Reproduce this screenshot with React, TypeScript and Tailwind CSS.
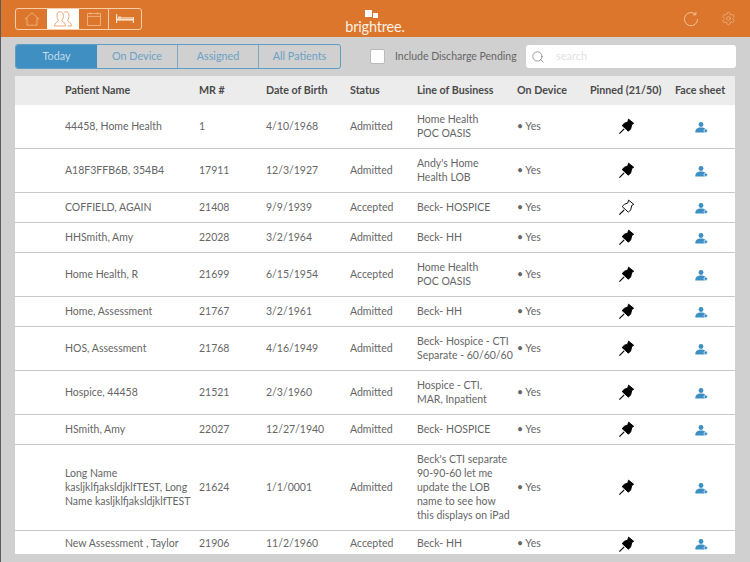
import { Search, Settings } from "lucide-react";

type Row = {
    name: string[];
    mr: string;
    dob: string;
    status: string;
    lob: string[];
    h: string;
    pinned?: boolean;
};

const rows: Row[] = [
    { name: ["44458, Home Health"], mr: "1", dob: "4/10/1968", status: "Admitted", lob: ["Home Health", "POC OASIS"], h: "h-[44px]", pinned: true },
    { name: ["A18F3FFB6B, 354B4"], mr: "17911", dob: "12/3/1927", status: "Admitted", lob: ["Andy's Home", "Health LOB"], h: "h-[44px]", pinned: true },
    { name: ["COFFIELD, AGAIN"], mr: "21408", dob: "9/9/1939", status: "Accepted", lob: ["Beck- HOSPICE"], h: "h-[30px]" },
    { name: ["HHSmith, Amy"], mr: "22028", dob: "3/2/1964", status: "Admitted", lob: ["Beck- HH"], h: "h-[30px]", pinned: true },
    { name: ["Home Health, R"], mr: "21699", dob: "6/15/1954", status: "Accepted", lob: ["Home Health", "POC OASIS"], h: "h-[44px]", pinned: true },
    { name: ["Home, Assessment"], mr: "21767", dob: "3/2/1961", status: "Admitted", lob: ["Beck- HH"], h: "h-[30px]", pinned: true },
    { name: ["HOS, Assessment"], mr: "21768", dob: "4/16/1949", status: "Admitted", lob: ["Beck- Hospice - CTI", "Separate - 60/60/60"], h: "h-[44px]", pinned: true },
    { name: ["Hospice, 44458"], mr: "21521", dob: "2/3/1960", status: "Admitted", lob: ["Hospice - CTI,", "MAR, Inpatient"], h: "h-[44px]", pinned: true },
    { name: ["HSmith, Amy"], mr: "22027", dob: "12/27/1940", status: "Admitted", lob: ["Beck- HOSPICE"], h: "h-[30px]", pinned: true },
    {
        name: ["Long Name", "kasljklfjaksldjklfTEST, Long", "Name kasljklfjaksldjklfTEST"],
        mr: "21624",
        dob: "1/1/0001",
        status: "Admitted",
        lob: ["Beck's CTI separate", "90-90-60 let me", "update the LOB", "name to see how", "this displays on iPad"],
        h: "h-[86px]",
        pinned: true,
    },
    { name: ["New Assessment , Taylor"], mr: "21906", dob: "11/2/1960", status: "Accepted", lob: ["Beck- HH"], h: "h-[26px]", pinned: true },
];

function Pin({ filled }: { filled?: boolean }) {
    return (
        <svg width="17" height="17" viewBox="0 0 18 18" className="text-black">
            <path d="M1.5 16.5 L6.5 11.5" stroke="currentColor" strokeWidth="1.2" />
            <path
                d="M11.2 1.2 L16.6 5.6 L14.6 6.8 L13.4 11.6 L11 14 L4.4 8 L6.8 5.6 L10.4 4.2 Z"
                fill={filled ? "currentColor" : "white"}
                stroke="currentColor"
                strokeWidth="1"
                strokeLinejoin="round"
            />
        </svg>
    );
}

function FaceSheet() {
    return (
        <svg width="13" height="11" viewBox="0 0 13 11" className="text-[#3d8fc4]">
            <circle cx="6" cy="2.5" r="2.4" fill="currentColor" />
            <path d="M0.3 10.6 C0.3 7.4 2 5.6 6 5.6 C10 5.6 11.7 7.4 11.7 10.6 Z" fill="currentColor" />
            <circle cx="10.8" cy="8.8" r="1.8" fill="currentColor" stroke="white" strokeWidth="0.7" />
        </svg>
    );
}

function HomeIcon() {
    return (
        <svg width="16" height="14" viewBox="0 0 16 14" fill="none" stroke="currentColor" strokeWidth="0.8">
            <path d="M0.8 7.2 L8 0.8 L15.2 7.2" />
            <path d="M3 6 V13.2 H13 V6" />
        </svg>
    );
}

function PeopleIcon() {
    return (
        <svg width="18" height="16" viewBox="0 0 18 16" fill="none" stroke="currentColor" strokeWidth="0.8">
            <path d="M10 15 H0.6 C0.6 12 2.4 11.4 4 10.4 C4.6 10 4.4 9 3.8 8.2 C3 7 3 5.6 3 4.4 C3 2 4.4 0.8 6.2 0.8 C8 0.8 9.4 2 9.4 4.4 C9.4 5.6 9.4 7 8.6 8.2 C8 9 7.8 10 8.4 10.4 C10 11.4 11.4 12 11.4 15 H10" />
            <path d="M10.2 1.2 C10.8 0.9 11.2 0.8 11.8 0.8 C13.6 0.8 15 2 15 4.4 C15 5.6 15 7 14.2 8.2 C13.6 9 13.4 10 14 10.4 C15.6 11.4 17.4 12 17.4 15 H13.4" />
        </svg>
    );
}

function CalendarIcon() {
    return (
        <svg width="14" height="14" viewBox="0 0 14 14" fill="none" stroke="currentColor" strokeWidth="0.8">
            <rect x="0.6" y="1.6" width="12.8" height="11.8" />
            <path d="M0.6 4.4 H13.4 M3.6 0.4 V2.6 M10.4 0.4 V2.6" />
        </svg>
    );
}

function BedIcon() {
    return (
        <svg width="18" height="9" viewBox="0 0 18 9" fill="currentColor">
            <rect x="0" y="0" width="1.2" height="9" />
            <rect x="16.8" y="3" width="1.2" height="6" />
            <rect x="1" y="4.6" width="16" height="2" />
            <rect x="2" y="2.6" width="3.4" height="2" />
            <path d="M5.8 3 H16.8 V4.6 H5.8 Z" opacity="0.65" />
        </svg>
    );
}

function RefreshIcon() {
    return (
        <svg width="16" height="16" viewBox="0 0 16 16" fill="none" stroke="currentColor" strokeWidth="0.9">
            <path d="M12.6 3.4 A6.6 6.6 0 1 0 14.6 8" />
            <path d="M12.9 0.8 V3.8 H9.9" />
        </svg>
    );
}

export default function App() {
    const cols = "grid grid-cols-[50px_134px_67px_84px_67px_100px_73px_85px_60px] items-center";

    return (
        <div className="w-[750px] h-[562px] overflow-hidden bg-[#d0d0d0] flex flex-col border-l border-[#5c5c5c] font-[family-name:Lato,sans-serif]">
            {/* top bar */}
            <div className="h-[37px] shrink-0 bg-[#db762c] grid grid-cols-[1fr_auto_1fr] items-center pl-[14px] pr-[14px]">
                <div className="flex h-[22px] w-[127px] border border-[#f5cfa9] rounded-[3px] overflow-hidden text-[#f3c08f]">
                    <div className="w-[31px] flex items-center justify-center"><HomeIcon /></div>
                    <div className="w-[32px] bg-white flex items-center justify-center text-[#e39353]"><PeopleIcon /></div>
                    <div className="w-[30px] flex items-center justify-center border-r border-[#f5cfa9]"><CalendarIcon /></div>
                    <div className="flex-1 flex items-center justify-center text-[#fbe3cb]"><BedIcon /></div>
                </div>
                <div className="flex flex-col items-center text-[#fdf0e3] pt-[6px] pr-[1px]">
                    <div className="flex h-[10px] w-[13px] gap-[1px] -ml-[6px]">
                        <div className="w-[7px] h-[7px] bg-white" />
                        <div className="w-[5px] h-[5px] bg-white mt-[3px]" />
                    </div>
                    <div className="text-[14.5px] leading-[13px] tracking-[-0.2px]">brightree.</div>
                </div>
                <div className="flex items-center justify-end gap-[22px] text-[#f4c9a2]">
                    <RefreshIcon />
                    <Settings size={15} strokeWidth={0.9} />
                </div>
            </div>

            {/* filter row */}
            <div className="h-[39px] shrink-0 flex items-center pl-[14px] pr-[14px]">
                <div className="flex h-[25px] w-[326px] border border-[#5d9ec6] rounded-[3px] overflow-hidden text-[10.8px] text-[#6aa2c4]">
                    <div className="w-[81px] bg-[#3f8fc3] text-[#c4dcea] flex items-center justify-center">Today</div>
                    <div className="w-[81px] flex items-center justify-center border-r border-[#7ba9c6]">On Device</div>
                    <div className="w-[81px] flex items-center justify-center border-r border-[#7ba9c6]">Assigned</div>
                    <div className="flex-1 flex items-center justify-center">All Patients</div>
                </div>
                <div className="w-[15px] h-[15px] bg-white rounded-[2px] border border-[#bbbbbb] ml-[29px]" />
                <div className="ml-[10px] w-[131px] text-[10.5px] text-[#666666] whitespace-nowrap">Include Discharge Pending</div>
                <div className="flex-1 h-[23px] bg-white rounded-[3px] flex items-center pl-[5px] gap-[11px]">
                    <Search size={14} strokeWidth={1.1} className="text-[#666666]" />
                    <span className="text-[11px] text-[#e2e2e2]">search</span>
                </div>
            </div>

            {/* table */}
            <div className="ml-[14px] w-[720px] h-[478px] bg-white overflow-hidden text-[10.5px] text-[#666666]">
                <div className={`${cols} h-[29px] bg-[#ececec] font-bold text-[#4a4a4a] text-[10.7px]`}>
                    <div />
                    <div>Patient Name</div>
                    <div>MR #</div>
                    <div>Date of Birth</div>
                    <div>Status</div>
                    <div>Line of Business</div>
                    <div>On Device</div>
                    <div>Pinned (21/50)</div>
                    <div>Face sheet</div>
                </div>
                {rows.map((r) => (
                    <div key={r.mr} className={`${cols} ${r.h} pb-[2px] border-b border-[#c8c8c8] last:border-b-0 leading-[14px]`}>
                        <div />
                        <div>{r.name.map((l) => <div key={l} className="whitespace-nowrap">{l}</div>)}</div>
                        <div>{r.mr}</div>
                        <div>{r.dob}</div>
                        <div>{r.status}</div>
                        <div>{r.lob.map((l) => <div key={l} className="whitespace-nowrap">{l}</div>)}</div>
                        <div>• Yes</div>
                        <div className="flex justify-center pr-[12px] pt-[2px]"><Pin filled={r.pinned} /></div>
                        <div className="flex justify-center pr-[8px] pt-[3px]"><FaceSheet /></div>
                    </div>
                ))}
            </div>
        </div>
    );
}
